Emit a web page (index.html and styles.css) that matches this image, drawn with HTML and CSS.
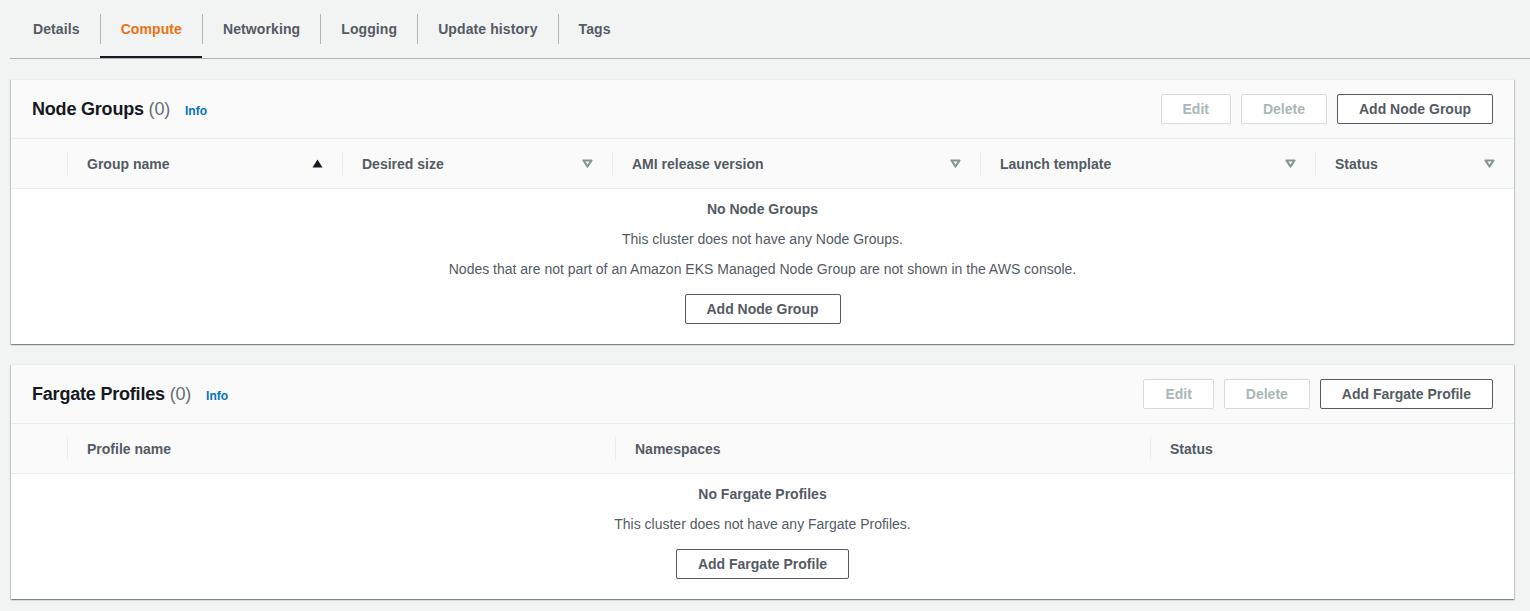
FILE: index.html
```html
<!DOCTYPE html>
<html>
<head>
<meta charset="utf-8">
<link rel="stylesheet" href="styles.css">
</head>
<body>
<div class="page">
  <nav class="tabs">
    <div class="tab first"><span class="tab-label">Details</span></div>
    <div class="tab active"><span class="tab-label">Compute</span></div>
    <div class="tab"><span class="tab-label">Networking</span></div>
    <div class="tab"><span class="tab-label">Logging</span></div>
    <div class="tab"><span class="tab-label">Update history</span></div>
    <div class="tab"><span class="tab-label">Tags</span></div>
  </nav>

  <section class="card">
    <header class="card-header">
      <h2 class="card-title">Node Groups <span class="count">(0)</span></h2>
      <a class="info">Info</a>
      <div class="actions">
        <button class="btn disabled">Edit</button>
        <button class="btn disabled">Delete</button>
        <button class="btn">Add Node Group</button>
      </div>
    </header>
    <div class="thead node-cols">
      <div class="th sel"></div>
      <div class="th"><span>Group name</span>
        <svg class="sort" width="11" height="9" viewBox="0 0 11 9"><polygon points="0.5,8.5 5.5,0.5 10.5,8.5" fill="#16191f"/></svg>
      </div>
      <div class="th"><span>Desired size</span>
        <svg class="sort" width="11" height="9" viewBox="0 0 11 9"><polygon points="1.5,1.5 9.5,1.5 5.5,7.5" fill="none" stroke="#879596" stroke-width="2.2" stroke-linejoin="round"/></svg>
      </div>
      <div class="th"><span>AMI release version</span>
        <svg class="sort" width="11" height="9" viewBox="0 0 11 9"><polygon points="1.5,1.5 9.5,1.5 5.5,7.5" fill="none" stroke="#879596" stroke-width="2.2" stroke-linejoin="round"/></svg>
      </div>
      <div class="th"><span>Launch template</span>
        <svg class="sort" width="11" height="9" viewBox="0 0 11 9"><polygon points="1.5,1.5 9.5,1.5 5.5,7.5" fill="none" stroke="#879596" stroke-width="2.2" stroke-linejoin="round"/></svg>
      </div>
      <div class="th"><span>Status</span>
        <svg class="sort" width="11" height="9" viewBox="0 0 11 9"><polygon points="1.5,1.5 9.5,1.5 5.5,7.5" fill="none" stroke="#879596" stroke-width="2.2" stroke-linejoin="round"/></svg>
      </div>
    </div>
    <div class="empty">
      <p class="empty-title">No Node Groups</p>
      <p>This cluster does not have any Node Groups.</p>
      <p>Nodes that are not part of an Amazon EKS Managed Node Group are not shown in the AWS console.</p>
      <button class="btn empty-btn">Add Node Group</button>
    </div>
  </section>

  <section class="card">
    <header class="card-header">
      <h2 class="card-title">Fargate Profiles <span class="count">(0)</span></h2>
      <a class="info">Info</a>
      <div class="actions">
        <button class="btn disabled">Edit</button>
        <button class="btn disabled">Delete</button>
        <button class="btn">Add Fargate Profile</button>
      </div>
    </header>
    <div class="thead fargate-cols">
      <div class="th sel"></div>
      <div class="th"><span>Profile name</span></div>
      <div class="th"><span>Namespaces</span></div>
      <div class="th"><span>Status</span></div>
    </div>
    <div class="empty">
      <p class="empty-title">No Fargate Profiles</p>
      <p>This cluster does not have any Fargate Profiles.</p>
      <button class="btn empty-btn">Add Fargate Profile</button>
    </div>
  </section>
</div>
</body>
</html>
```

FILE: styles.css
```css
* { box-sizing: border-box; }
html, body {
  margin: 0;
  padding: 0;
  background: #f2f3f3;
  font-family: "Liberation Sans", Arial, sans-serif;
  font-size: 14px;
  color: #16191f;
}
.page {
  padding: 0 0 20px 0;
}
.tabs {
  display: flex;
  margin-left: 10px;
  padding-left: 3px;
  border-bottom: 1px solid #aab7b8;
  height: 59px;
}
.tab {
  display: flex;
  align-items: center;
  height: 58px;
  border-bottom: 2px solid transparent;
  padding-top: 2px;
}
.tab-label {
  display: block;
  height: 30px;
  line-height: 30px;
  padding: 0 20px;
  border-left: 1px solid #aab7b8;
  font-weight: 700;
  color: #545b64;
  letter-spacing: 0.1px;
}
.tab.first .tab-label { border-left: none; padding-left: 20px; }
.tab.active { border-bottom-color: #16191f; }
.tab.active .tab-label { color: #ec7211; }

.card {
  margin: 20px 16px 0 11px;
  background: #fff;
  box-shadow: 0 1px 1px 0 rgba(0,28,36,.3), 1px 1px 1px 0 rgba(0,28,36,.15), -1px 1px 1px 0 rgba(0,28,36,.15);
  border-top: 1px solid #eaeded;
}
.card-header {
  display: flex;
  align-items: center;
  height: 59px;
  padding: 0 21px 0 21px;
  background: #fafafa;
  border-bottom: 1px solid #eaeded;
}
.card-title {
  margin: 0;
  font-size: 18px;
  font-weight: 700;
  color: #16191f;
  line-height: 22px;
  letter-spacing: -0.2px;
}
.count {
  font-weight: 400;
  color: #687078;
}
.info {
  margin-left: 15px;
  font-size: 12px;
  font-weight: 700;
  color: #0073bb;
  padding-top: 3px;
}
.actions {
  margin-left: auto;
  display: flex;
  gap: 10px;
}
.btn {
  height: 30px;
  padding: 0 21px;
  border: 1px solid #545b64;
  border-radius: 2px;
  background: #fff;
  font-family: inherit;
  font-size: 14px;
  font-weight: 700;
  color: #545b64;
  line-height: 28px;
}
.btn.disabled {
  border-color: #d5dbdb;
  color: #aab7b8;
}

.thead {
  display: grid;
  height: 50px;
  background: #fafafa;
  border-bottom: 1px solid #eaeded;
}
.node-cols { grid-template-columns: 56px 275px 270px 368px 335px 1fr; }
.fargate-cols { grid-template-columns: 56px 548px 535px 1fr; }
.th {
  display: flex;
  align-items: center;
  justify-content: space-between;
  padding: 0 19px 0 20px;
  font-weight: 700;
  color: #545b64;
  position: relative;
}
.th + .th::before {
  content: "";
  position: absolute;
  left: 0;
  top: 13px;
  height: 23px;
  border-left: 1px solid #eaeded;
}
.sort { flex: none; }

.empty {
  text-align: center;
  padding: 10px 0 20px;
  color: #545b64;
}
.empty p {
  margin: 0 0 10px;
  line-height: 20px;
}
.empty-title { font-weight: 700; }
.empty-btn { margin-top: 5px; }
```
